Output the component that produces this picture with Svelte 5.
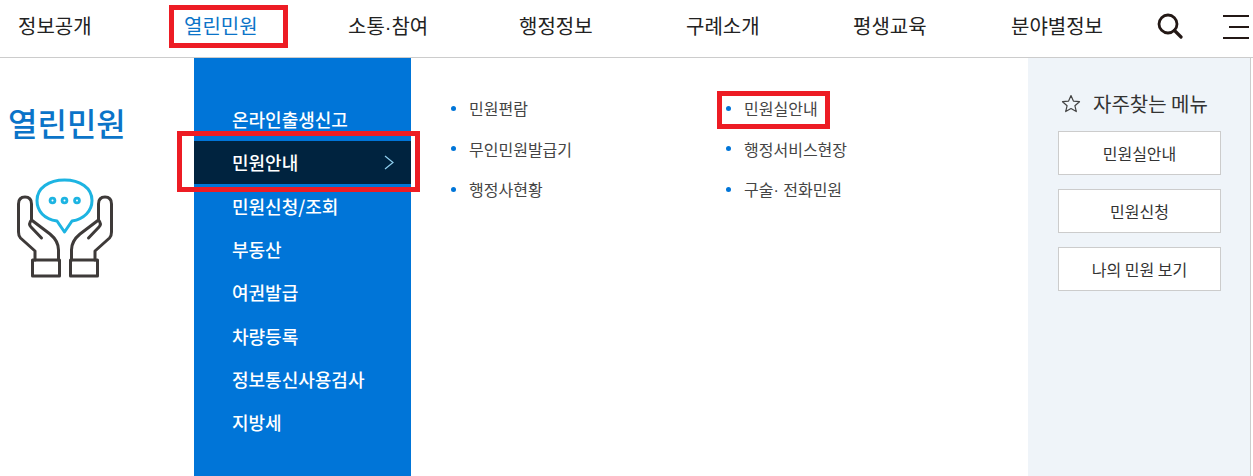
<script>
  const nav = ['정보공개', '열린민원', '소통·참여', '행정정보', '구례소개', '평생교육', '분야별정보'];
  const side = ['온라인출생신고', '민원안내', '민원신청/조회', '부동산', '여권발급', '차량등록', '정보통신사용검사', '지방세'];
  const colA = ['민원편람', '무인민원발급기', '행정사현황'];
  const colB = ['민원실안내', '행정서비스현장', '구술· 전화민원'];
  const quick = ['민원실안내', '민원신청', '나의 민원 보기'];
</script>

<div class="page">
  <header class="top">
    <nav class="gnb">
      {#each nav as item, i}
        <span class:on={i === 1}>{item}</span>
      {/each}
    </nav>
    <svg class="search" width="26" height="26" viewBox="0 0 26 26" aria-label="검색">
      <circle cx="11" cy="11" r="9" fill="none" stroke="#231815" stroke-width="2.800" />
      <path d="M17.500 17.500L24 24" stroke="#231815" stroke-width="3.200" stroke-linecap="round" />
    </svg>
    <svg class="burger" width="26" height="24" viewBox="0 0 26 24" aria-label="전체메뉴">
      <path d="M0 1H26M6 12H26M0 23H26" stroke="#231815" stroke-width="2" fill="none" />
    </svg>
  </header>

  <main class="body">
    <section class="title">
      <h2>열린민원</h2>
      <svg class="hands" width="100" height="104" viewBox="15 176 100 104" fill="none">
        <g stroke="#3e3a39" stroke-width="3" stroke-linejoin="round" stroke-linecap="round">
          <path d="M35 260V251L20.500 238Q18.500 236 18.500 232V204Q18.500 197 25 197Q31.500 197 31.500 204V220L50 234Q58.500 241 58.500 250V260" />
          <path d="M31.500 220Q28 224 31 227L41.500 238" />
          <rect x="32.500" y="260" width="27" height="16" />
          <path d="M95 260V251L109.500 238Q111.500 236 111.500 232V204Q111.500 197 105 197Q98.500 197 98.500 204V220L80 234Q71.500 241 71.500 250V260" />
          <path d="M98.500 220Q102 224 99 227L88.500 238" />
          <rect x="70.500" y="260" width="27" height="16" />
        </g>
        <path d="M57 221C44 219 37 211 37 200.500C37 188 49 180 64.500 180C80 180 92 188 92 200.500C92 211 84 219 72 221L64.500 232Z" stroke="#1db4e2" stroke-width="3" stroke-linejoin="round" />
        <g fill="#1db4e2">
          <circle cx="52.500" cy="200.500" r="3.800" />
          <circle cx="64.500" cy="200.500" r="3.800" />
          <circle cx="77" cy="200.500" r="3.800" />
        </g>
        <g fill="#fff">
          <circle cx="52.500" cy="200.500" r="1" />
          <circle cx="64.500" cy="200.500" r="1" />
          <circle cx="77" cy="200.500" r="1" />
        </g>
      </svg>
    </section>

    <ul class="side">
      {#each side as item, i}
        <li class:active={i === 1}>
          {item}
          {#if i === 1}
            <svg width="10" height="15" viewBox="0 0 10 15" fill="none">
              <path d="M1 1L9 7.500L1 14" stroke="#8fd0f0" stroke-width="1.200" />
            </svg>
          {/if}
        </li>
      {/each}
    </ul>

    <div class="lists">
      <ul>
        {#each colA as item}
          <li>{item}</li>
        {/each}
      </ul>
      <ul>
        {#each colB as item}
          <li>{item}</li>
        {/each}
      </ul>
    </div>

    <aside class="quick">
      <h3>
        <svg width="20" height="19" viewBox="0 0 20 19" fill="none">
          <path d="M10 1.500L12.400 7.100L18.500 7.700L13.900 11.700L15.300 17.600L10 14.500L4.700 17.600L6.100 11.700L1.500 7.700L7.600 7.100Z" stroke="#444" stroke-width="1.200" stroke-linejoin="round" />
        </svg>
        자주찾는 메뉴
      </h3>
      {#each quick as item}
        <div class="quick-btn">{item}</div>
      {/each}
    </aside>
  </main>

  <!-- annotation boxes drawn over the captured page -->
  <div class="mark mark-nav"></div>
  <div class="mark mark-side"></div>
  <div class="mark mark-item"></div>
</div>

<style>
  :global(body) {
    margin: 0;
    background: #fff;
  }

  .page {
    position: relative;
    width: 1253px;
    height: 476px;
    overflow: hidden;
    font-family: "Noto Sans CJK KR", "Noto Sans", sans-serif;
    color: #333;
  }

  .top {
    display: flex;
    align-items: center;
    height: 58px;
    padding-left: 18px;
    box-sizing: border-box;
    border-bottom: 1px solid #ccc;
  }

  .gnb {
    display: grid;
    grid-template-columns: 166px 164px 171px 167px 167px 158px auto;
    width: 1085px;
    font-family: "Liberation Sans", "Noto Sans CJK KR", sans-serif;
    font-size: 20px;
    color: #222;
    line-height: 26px;
    margin-bottom: 3px;
  }

  .gnb .on {
    color: #0b74c8;
  }

  .search {
    margin-left: 54px;
    margin-bottom: 6px;
  }

  .burger {
    margin-left: 40px;
    margin-bottom: 4px;
  }

  .body {
    display: flex;
    height: 418px;
  }

  .title {
    width: 194px;
    padding: 43px 0 0 8px;
    box-sizing: border-box;
  }

  .title h2 {
    margin: 0 0 33px;
    font-size: 32px;
    line-height: 42px;
    font-weight: 500;
    color: #0b74c8;
  }

  .hands {
    display: block;
    margin-left: 7px;
  }

  .side {
    width: 217px;
    margin: 0;
    padding: 39.500px 0 0;
    list-style: none;
    background: #0075d8;
    color: #fff;
  }

  .side li {
    display: flex;
    align-items: center;
    justify-content: space-between;
    height: 43.300px;
    padding: 0 17px 0 38px;
    font-size: 18px;
    font-weight: 500;
  }

  .side li.active {
    background: #00233f;
  }

  .lists {
    display: flex;
    flex: 1;
    padding: 30px 0 0 40px;
  }

  .lists ul {
    width: 275px;
    margin: 0;
    padding: 0;
    list-style: none;
  }

  .lists li {
    display: flex;
    align-items: center;
    height: 40.500px;
    font-family: "Liberation Sans", "Noto Sans CJK KR", sans-serif;
    font-size: 16px;
    color: #444;
  }

  .lists li::before {
    content: "";
    width: 5px;
    height: 5px;
    margin-right: 13px;
    border-radius: 50%;
    background: #0075d8;
  }

  .quick {
    width: 223px;
    margin-right: 2px;
    padding: 32px 0 0 30px;
    box-sizing: border-box;
    background: #eff4f9;
    border-right: 1px solid #ccc;
  }

  .quick h3 {
    display: flex;
    align-items: center;
    gap: 12px;
    margin: 0 0 14px;
    padding-left: 3px;
    font-size: 20px;
    line-height: 27px;
    font-weight: 400;
    color: #333;
  }

  .quick-btn {
    display: flex;
    align-items: center;
    justify-content: center;
    width: 163px;
    height: 44px;
    margin-bottom: 14px;
    box-sizing: border-box;
    background: #fff;
    border: 1px solid #ccc;
    font-size: 16px;
    color: #333;
  }

  .mark {
    position: absolute;
    box-sizing: border-box;
    border: 5px solid #ed1c24;
  }

  .mark-nav {
    left: 169px;
    top: 5px;
    width: 119px;
    height: 43px;
  }

  .mark-side {
    left: 177px;
    top: 131px;
    width: 243px;
    height: 61px;
  }

  .mark-item {
    left: 717px;
    top: 91px;
    width: 113px;
    height: 38px;
  }
</style>
